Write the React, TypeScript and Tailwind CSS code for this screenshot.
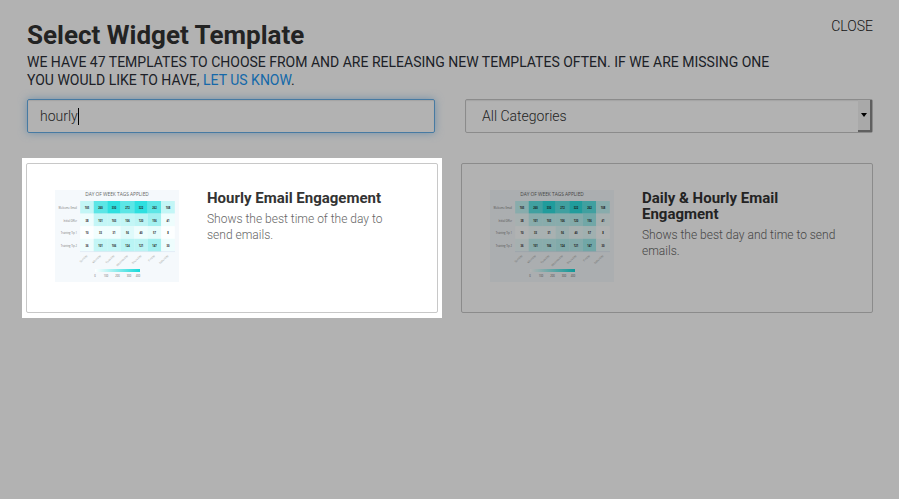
import React, { useState } from 'react';

interface Template {
    title: string;
    description: string;
    highlighted?: boolean;
}

const templates: Template[] = [
    { title: 'Hourly Email Engagement', description: 'Shows the best time of the day to send emails.', highlighted: true },
    { title: 'Daily & Hourly Email Engagment', description: 'Shows the best day and time to send emails.' },
];

const days = ['Sunday', 'Monday', 'Tuesday', 'Wednesday', 'Thursday', 'Friday', 'Saturday'];

const rows = [
    { label: 'Welcome Email', values: [105, 260, 330, 272, 322, 262, 108], fills: ['#c3f6f6', '#5ce6e6', '#2ee0e0', '#5ce6e6', '#2ee0e0', '#5ce6e6', '#c3f6f6'] },
    { label: 'Initial Offer', values: [38, 101, 103, 106, 120, 156, 41], fills: ['#eefdfd', '#c3f6f6', '#c3f6f6', '#c3f6f6', '#bcf4f4', '#a3f0f0', '#eefdfd'] },
    { label: 'Training Tip 1', values: [10, 33, 31, 56, 40, 57, 8], fills: ['#fdffff', '#f1fefe', '#f1fefe', '#dffafa', '#eefdfd', '#e6fcfc', '#fdffff'] },
    { label: 'Training Tip 2', values: [36, 101, 106, 124, 121, 147, 30], fills: ['#eefdfd', '#c3f6f6', '#c3f6f6', '#b9f4f4', '#bcf4f4', '#a3f0f0', '#eefdfd'] },
];

const legend = [
    { value: 0, x: 40 },
    { value: 100, x: 51 },
    { value: 200, x: 62.5 },
    { value: 300, x: 74 },
    { value: 400, x: 83 },
];

function HeatmapPreview({ id }: { id: string }) {
    return (
        <svg viewBox="0 0 124 92" className="w-[124px] h-[92px] shrink-0 font-['Open_Sans',sans-serif]" aria-hidden="true">
            <defs>
                <linearGradient id={id}>
                    <stop offset="0" stopColor="#ffffff" />
                    <stop offset="1" stopColor="#16dada" />
                </linearGradient>
            </defs>
            <rect width="124" height="92" fill="#f5f9fc" />
            <text x="62" y="6.4" fontSize="4.8" textAnchor="middle" fill="#666">DAY OF WEEK TAGS APPLIED</text>
            {rows.map((row, r) => (
                <g key={row.label}>
                    <text x="22" y={19 + r * 12.5} fontSize="2.6" textAnchor="end" fill="#777">{row.label}</text>
                    {row.values.map((value, c) => (
                        <g key={c}>
                            <rect x={25.2 + c * 13.5} y={11 + r * 12.6} width="13.6" height="12.7" fill={row.fills[c]} />
                            <text x={32 + c * 13.5} y={19 + r * 12.5} fontSize="2.6" fontWeight="700" textAnchor="middle" fill="#222">{value}</text>
                        </g>
                    ))}
                </g>
            ))}
            <path d="M25 61.6H120" stroke="#ccd6eb" strokeWidth="0.4" />
            {days.map((day, i) => (
                <text key={day} fontSize="2.8" textAnchor="end" fill="#999" transform={`translate(${32.5 + i * 13.5} 66) rotate(-45)`}>{day}</text>
            ))}
            <rect x="40" y="79" width="45" height="3" fill={`url(#${id})`} />
            {legend.map((tick) => (
                <text key={tick.value} x={tick.x} y="86.6" fontSize="2.6" textAnchor="middle" fill="#666">{tick.value}</text>
            ))}
        </svg>
    );
}

function TemplateCard({ template, id }: { template: Template; id: string }) {
    return (
        <div className={template.highlighted ? 'relative z-20 -mx-1 -my-[5px] px-1 py-[5px] bg-white' : ''}>
            <button type="button" className="flex items-start gap-7 w-full h-[150px] rounded-[2px] border border-[#c8c8c8] bg-white py-[26px] px-7 text-left">
                <HeatmapPreview id={id} />
                <span className="block flex-1 pr-1">
                    <span className="block text-[15px] leading-4 font-bold text-[#333]">{template.title}</span>
                    <span className="block mt-[5px] text-[12px] leading-4 font-light text-[#666]">{template.description}</span>
                </span>
            </button>
        </div>
    );
}

export default function App() {
    const [search, setSearch] = useState('hourly');

    return (
        <div className="relative min-h-screen bg-white font-[Roboto,sans-serif] text-[#333]">
            <div className="px-[26px] pt-[18px]">
                <div className="flex items-start justify-between pl-px">
                    <div className="max-w-[750px]">
                        <h1 className="text-[26px] leading-[35px] font-bold">Select Widget Template</h1>
                        <p className="text-[14px] leading-[18px] text-[#2b2f38] uppercase">
                            We have 47 templates to choose from and are releasing new templates often. If we are missing one you would like to have,{' '}
                            <a href="#" className="text-[#2196f3]">let us know</a>.
                        </p>
                    </div>
                    <button type="button" className="text-[14px] leading-4 font-light text-[#222] uppercase">Close</button>
                </div>

                <div className="grid grid-cols-2 gap-[30px] mt-[10px] pl-px">
                    <div className="relative">
                        <input
                            type="text"
                            aria-label="Search templates"
                            value={search}
                            onChange={(e) => setSearch(e.target.value)}
                            className="block w-full h-[34px] rounded-[2px] border border-[#66afe9] px-3 text-[14px] font-light outline-none shadow-[inset_0_1px_1px_rgba(0,0,0,0.08),0_0_8px_rgba(102,175,233,0.6)]"
                        />
                        {/* text caret */}
                        <span className="absolute left-[51px] top-[9px] w-px h-[17px] bg-black" />
                    </div>
                    <div className="relative">
                        <select
                            aria-label="Category"
                            className="block w-full h-[34px] appearance-none rounded-[2px] border border-[#c8c8c8] bg-white px-4 text-[14px] font-light outline-none shadow-[inset_0_1px_1px_rgba(0,0,0,0.08)]"
                        >
                            <option>All Categories</option>
                        </select>
                        <span className="pointer-events-none absolute right-px top-px bottom-px w-[14px] flex items-center justify-center border-r-2 border-b-2 border-[#888] bg-[#f2f2f2]">
                            <svg viewBox="0 0 6 4" className="w-[6px] h-[4px]" aria-hidden="true">
                                <path d="M0 0H6L3 4Z" fill="#000" />
                            </svg>
                        </span>
                    </div>
                </div>

                <div className="grid grid-cols-2 gap-[23px] mt-[30px]">
                    {templates.map((template, i) => (
                        <TemplateCard key={template.title} template={template} id={`scale-${i}`} />
                    ))}
                </div>
            </div>

            {/* dims everything except the highlighted template */}
            <div className="pointer-events-none absolute inset-0 z-10 bg-black/30" />
        </div>
    );
}
